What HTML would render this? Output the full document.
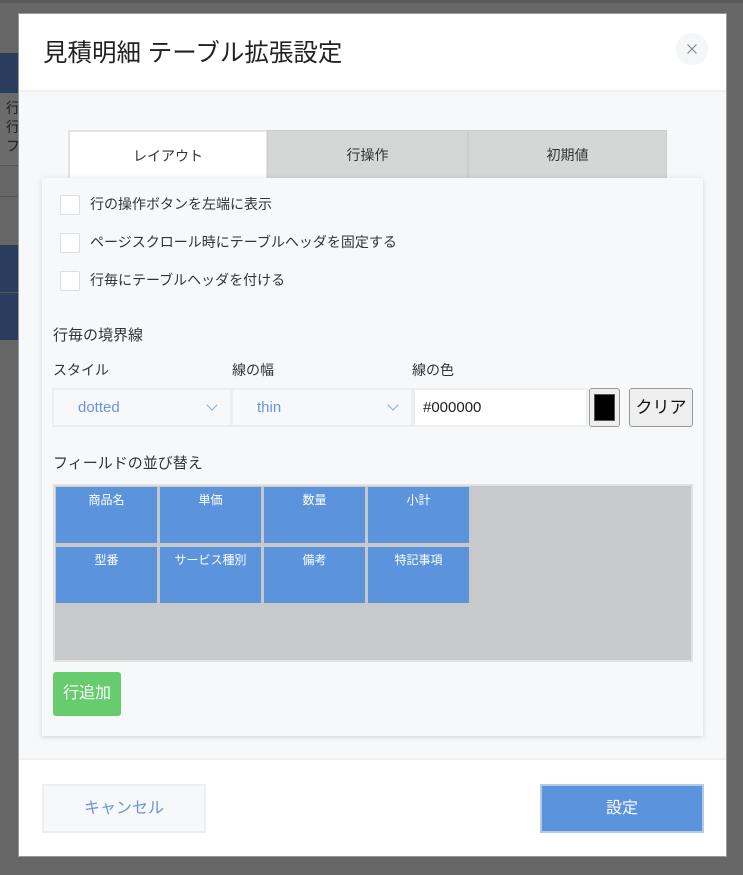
<!DOCTYPE html>
<html><head><meta charset="utf-8"><style>
*{box-sizing:border-box;margin:0;padding:0}
body{width:743px;height:875px;background:#666;position:relative;overflow:hidden;font-family:"Liberation Sans","Noto Sans CJK JP",sans-serif;color:#333}
.a{position:absolute}
.cb{position:absolute;left:18px;width:20px;height:20px;background:#fff;border:1px solid #ddd;border-radius:2px}
.lbl{position:absolute;font-size:14px;color:#333}
.tile{position:absolute;width:101px;height:56px;background:#5b93dc;color:#fff;font-size:12px;text-align:center;padding-top:4px}
.sel{position:absolute;top:388px;height:39px;background:#f7f8fa;border:2px solid #eceef1;color:#6b93dd;font-size:15px;padding:9px 0 0 24px}
.chev{position:absolute;right:14px;top:11px;width:8px;height:8px;border-right:1px solid #8aa8dd;border-bottom:1px solid #8aa8dd;transform:rotate(45deg)}
</style></head><body>
<div class="a" style="left:0;top:0;width:743px;height:3px;background:#5a5a5a"></div>
<div class="a" style="left:0;top:53px;width:18px;height:40px;background:#2b3d5e"></div>
<div class="a" style="left:0;top:93px;width:18px;height:72px;background:#6b6b6b;font-size:14px;color:#222;line-height:19px;padding:6px 0 0 6px;overflow:hidden">行<br>行<br>フ</div>
<div class="a" style="left:0;top:165px;width:18px;height:1px;background:#555"></div>
<div class="a" style="left:0;top:196px;width:18px;height:1px;background:#555"></div>
<div class="a" style="left:0;top:245px;width:18px;height:95px;background:#2b3d5e"></div>
<div class="a" style="left:0;top:292px;width:18px;height:1px;background:#555"></div>

<div class="a" style="left:18px;top:13px;width:709px;height:844px;background:#fff;border:1px solid #999">
  <div class="a" style="left:0;top:0;width:707px;height:76px;background:#fff"></div>
  <div class="a" style="left:24px;top:20px;font-size:24.5px;color:#222">見積明細 テーブル拡張設定</div>
  <div class="a" style="left:657px;top:19px;width:32px;height:32px;border-radius:50%;background:#f5f6f8">
    <svg width="32" height="32" viewBox="0 0 32 32"><path d="M11.5 11.5L20.5 20.5M20.5 11.5L11.5 20.5" stroke="#888" stroke-width="1.2"/></svg>
  </div>
  <div class="a" style="left:0;top:76px;width:707px;height:670px;background:#f7f8fa;border-top:2px solid #eef0f3;border-bottom:2px solid #eef0f3"></div>
</div>

<div class="a" style="left:68px;top:130px;width:200px;height:50px;background:#fff;border:2px solid #e2e3e5;border-bottom:none;font-size:14px;text-align:center;line-height:48px">レイアウト</div>
<div class="a" style="left:267px;top:130px;width:201px;height:49px;background:#d5d6d6;border:1px solid #ccc;font-size:14px;text-align:center;line-height:48px">行操作</div>
<div class="a" style="left:468px;top:130px;width:199px;height:49px;background:#d5d6d6;border:1px solid #ccc;font-size:14px;text-align:center;line-height:48px">初期値</div>

<div class="a" style="left:42px;top:178px;width:661px;height:558px;background:#f7f8fa;box-shadow:0 1px 5px rgba(0,0,0,.15)">
  <div class="cb" style="top:17px"></div><div class="lbl" style="left:48px;top:16px">行の操作ボタンを左端に表示</div>
  <div class="cb" style="top:55px"></div><div class="lbl" style="left:48px;top:54px">ページスクロール時にテーブルヘッダを固定する</div>
  <div class="cb" style="top:93px"></div><div class="lbl" style="left:48px;top:92px">行毎にテーブルヘッダを付ける</div>
  <div class="lbl" style="left:11px;top:146px;font-size:15px">行毎の境界線</div>
  <div class="lbl" style="left:11px;top:182px">スタイル</div>
  <div class="lbl" style="left:190px;top:182px">線の幅</div>
  <div class="lbl" style="left:370px;top:182px">線の色</div>
  <div class="lbl" style="left:11px;top:274px;font-size:15px">フィールドの並び替え</div>
</div>
<div class="sel" style="left:52px;width:180px">dotted<div class="chev"></div></div>
<div class="sel" style="left:231px;width:182px">thin<div class="chev"></div></div>
<div class="a" style="left:413px;top:388px;width:175px;height:39px;background:#fff;border:2px solid #eceef1;font-size:15px;color:#222;padding:9px 0 0 8px">#000000</div>
<div class="a" style="left:589px;top:388px;width:31px;height:39px;background:#eee;border:1px solid #999;border-radius:3px;padding:5px 4px"><div style="width:100%;height:100%;background:#000;border:1px solid #555"></div></div>
<div class="a" style="left:629px;top:388px;width:64px;height:39px;background:#efefef;border:1px solid #999;border-radius:3px;font-size:17px;color:#111;text-align:center;line-height:37px">クリア</div>

<div class="a" style="left:53px;top:484px;width:640px;height:178px;background:#c8c9cb;border:2px solid #e0e1e3"></div>
<div class="tile" style="left:56px;top:487px">商品名</div>
<div class="tile" style="left:160px;top:487px">単価</div>
<div class="tile" style="left:264px;top:487px">数量</div>
<div class="tile" style="left:368px;top:487px">小計</div>
<div class="tile" style="left:56px;top:547px">型番</div>
<div class="tile" style="left:160px;top:547px">サービス種別</div>
<div class="tile" style="left:264px;top:547px">備考</div>
<div class="tile" style="left:368px;top:547px">特記事項</div>

<div class="a" style="left:53px;top:672px;width:68px;height:44px;background:#66cc6e;border-radius:3px;color:#fff;font-size:16px;text-align:center;line-height:43px">行追加</div>

<div class="a" style="left:42px;top:784px;width:164px;height:49px;background:#f7f8fa;border:2px solid #eceef1;color:#6b93dd;font-size:16px;text-align:center;line-height:45px">キャンセル</div>
<div class="a" style="left:540px;top:784px;width:164px;height:49px;background:#5b93dc;border:2px solid #b5c8e8;color:#fff;font-size:16px;text-align:center;line-height:45px">設定</div>
</body></html>
